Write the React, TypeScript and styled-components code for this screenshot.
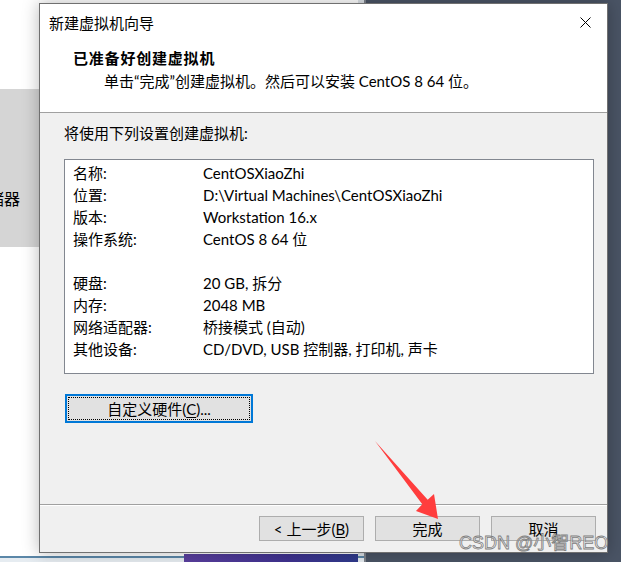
import React from 'react'
import styled, { createGlobalStyle } from 'styled-components'

const uiFont = `Lato, "Noto Sans CJK SC", sans-serif`

const GlobalStyle = createGlobalStyle`
  html, body {
    margin: 0;
    padding: 0;
    background: #4a5465;
  }
  * {
    box-sizing: border-box;
  }
`

const Desktop = styled.div`
  position: relative;
  width: 621px;
  height: 562px;
  overflow: hidden;
  background: #4a5465;
  font-family: ${uiFont};
`

const BackWindow = styled.div`
  position: absolute;
  left: 0;
  top: 0;
  width: 366px;
  height: 562px;
  background: #ffffff;
  border-right: 2px solid #7d828b;
  box-shadow: inset -6px 0 0 #dde2e7;
  display: flex;
  flex-direction: column;
`

const GrayBand = styled.div`
  margin-top: 89px;
  height: 158px;
  background: #d5d5d5;
  display: flex;
  align-items: flex-start;
  padding-top: 100px;
`

const ClipLabel = styled.div`
  width: 20px;
  overflow: hidden;
  display: flex;
  justify-content: flex-end;
  span {
    white-space: nowrap;
    font-size: 16px;
    line-height: 20px;
    color: #000;
  }
`

const BottomStrip = styled.div`
  margin-top: auto;
  height: 6px;
  border-top: 2px solid #5b87a8;
  background: #e6ecf1;
  display: flex;
  padding-left: 184px;
  padding-right: 6px;
`

const Thumb = styled.div`
  flex: 1;
  margin-top: -4px;
  background: linear-gradient(90deg, #5a3f9e, #3f3290 60%, #2f3a8c);
`

const Dialog = styled.div`
  position: absolute;
  left: 39px;
  top: 3px;
  width: 569px;
  height: 550px;
  border: 1px solid #707070;
  background: #f0f0f0;
  box-shadow: 0 0 16px rgba(0, 0, 0, 0.28);
  display: flex;
  flex-direction: column;
`

const Header = styled.div`
  height: 109px;
  background: #ffffff;
  border-bottom: 1px solid #a0a0a0;
  display: flex;
  flex-direction: column;
`

const TitleRow = styled.div`
  height: 36px;
  display: flex;
  align-items: center;
  justify-content: space-between;
  padding: 0 16px 0 9px;
  font-size: 15px;
  color: #000;
`

const Heading = styled.div`
  margin-top: 8px;
  padding-left: 33px;
  font-size: 15px;
  line-height: 20px;
  font-weight: 700;
  letter-spacing: 0.8px;
  color: #000;
`

const SubText = styled.div`
  margin-top: 3px;
  padding-left: 64px;
  font-size: 15px;
  line-height: 20px;
  color: #000;
`

const Body = styled.div`
  height: 391px;
  padding: 10px 13px 0 24px;
  display: flex;
  flex-direction: column;
  align-items: flex-start;
`

const Intro = styled.div`
  font-size: 15px;
  line-height: 20px;
  color: #000;
`

const SummaryBox = styled.div`
  margin-top: 16px;
  width: 530px;
  height: 215px;
  background: #ffffff;
  border: 1px solid #828790;
  padding: 2px 0 0 8px;
  display: grid;
  grid-template-columns: 130px 1fr;
  grid-auto-rows: 22px;
  align-items: center;
  font-size: 15px;
  color: #000;
`

const Cell = styled.div`
  white-space: nowrap;
  line-height: 22px;
`

const Button = styled.button<{ $width: number; $focused?: boolean }>`
  position: relative;
  width: ${p => p.$width}px;
  height: ${p => (p.$focused ? 29 : 25)}px;
  background: #e1e1e1;
  border: ${p => (p.$focused ? '2px solid #0078d7' : '1px solid #adadad')};
  font-family: ${uiFont};
  font-size: 15px;
  color: #000;
  padding: 0;
  cursor: default;
  display: flex;
  align-items: center;
  justify-content: center;
  ${p =>
    p.$focused &&
    `
    &::after {
      content: '';
      position: absolute;
      inset: 1px;
      border: 1px dotted #000;
    }
  `}
`

const CustomButton = styled(Button)`
  margin-top: 20px;
  margin-left: 1px;
`

const Key = styled.span`
  text-decoration: underline;
  text-underline-offset: 2px;
`

const Separator = styled.div`
  height: 2px;
  border-top: 1px solid #a0a0a0;
  border-bottom: 1px solid #ffffff;
`

const Footer = styled.div`
  flex: 1;
  display: flex;
  justify-content: flex-end;
  align-items: flex-start;
  gap: 11px;
  padding: 10px 11px 0 0;
`

const Overlay = styled.svg`
  position: absolute;
  left: 0;
  top: 0;
  pointer-events: none;
`

const Watermark = styled.div`
  position: absolute;
  left: 459px;
  top: 531px;
  font-family: "Liberation Sans", "Noto Sans CJK SC", sans-serif;
  font-size: 18px;
  line-height: 24px;
  color: rgba(245, 245, 245, 0.6);
  -webkit-text-stroke: 0.8px #7e7e7e;
  white-space: nowrap;
  pointer-events: none;
`

const rows: [string, string][] = [
  ['名称:', 'CentOSXiaoZhi'],
  ['位置:', 'D:\\Virtual Machines\\CentOSXiaoZhi'],
  ['版本:', 'Workstation 16.x'],
  ['操作系统:', 'CentOS 8 64 位'],
  ['', ''],
  ['硬盘:', '20 GB, 拆分'],
  ['内存:', '2048 MB'],
  ['网络适配器:', '桥接模式 (自动)'],
  ['其他设备:', 'CD/DVD, USB 控制器, 打印机, 声卡'],
]

const CloseIcon = () => (
  <svg width="11" height="11" viewBox="0 0 11 11">
    <path d="M0.5 0.5 L10.5 10.5 M10.5 0.5 L0.5 10.5" stroke="#000" strokeWidth="1" />
  </svg>
)

export default function App() {
  return (
    <Desktop>
      <GlobalStyle />
      <BackWindow>
        <GrayBand>
          <ClipLabel>
            <span>存储器</span>
          </ClipLabel>
        </GrayBand>
        <BottomStrip>
          <Thumb />
        </BottomStrip>
      </BackWindow>

      <Dialog>
        <Header>
          <TitleRow>
            <span>新建虚拟机向导</span>
            <CloseIcon />
          </TitleRow>
          <Heading>已准备好创建虚拟机</Heading>
          <SubText>单击“完成”创建虚拟机。然后可以安装 CentOS 8 64 位。</SubText>
        </Header>

        <Body>
          <Intro>将使用下列设置创建虚拟机:</Intro>
          <SummaryBox>
            {rows.map(([label, value], i) => (
              <React.Fragment key={i}>
                <Cell>{label}</Cell>
                <Cell>{value}</Cell>
              </React.Fragment>
            ))}
          </SummaryBox>
          <CustomButton $width={188} $focused>
            自定义硬件(<Key>C</Key>)...
          </CustomButton>
        </Body>

        <Separator />

        <Footer>
          <Button $width={105}>
            &lt; 上一步(<Key>B</Key>)
          </Button>
          <Button $width={105}>完成</Button>
          <Button $width={105}>取消</Button>
        </Footer>
      </Dialog>

      <Overlay width="621" height="562" viewBox="0 0 621 562">
        <polygon
          points="375,441 427.7,499.8 434,494 438,519 416,511 422.3,504.2"
          fill="#ff3d3d"
        />
      </Overlay>

      <Watermark>CSDN @小智REO</Watermark>
    </Desktop>
  )
}
